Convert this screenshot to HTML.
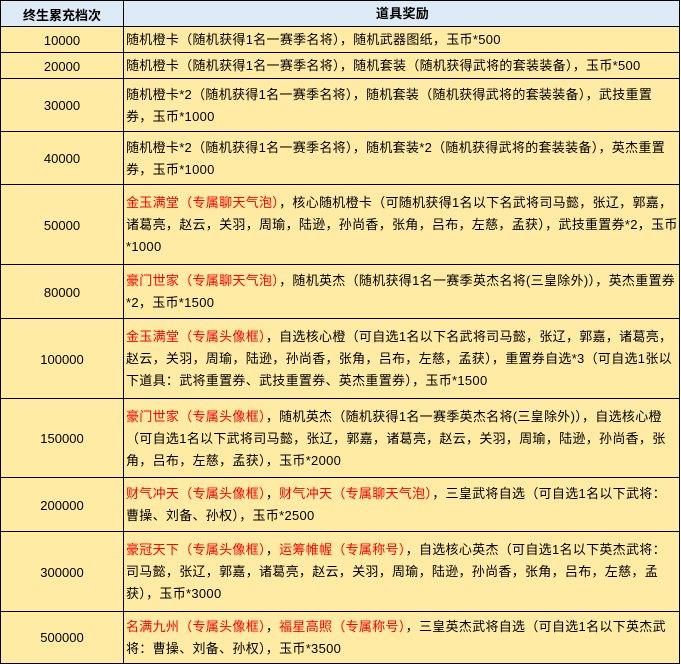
<!DOCTYPE html>
<html><head><meta charset="utf-8"><style>
body{margin:0;width:681px;height:664px;background:#fff;font-family:"Liberation Sans","Noto Sans CJK SC",sans-serif;font-size:13px;color:#000;overflow:hidden}
.r{position:absolute;left:0;width:680px;display:flex;background:#FFEBA4;border-top:1px solid #000;box-sizing:border-box}
.a{width:124px;border-left:1px solid #000;border-right:1px solid #000;display:flex;align-items:center;justify-content:center;box-sizing:border-box}
.b{flex:1;display:flex;align-items:center;padding-left:2px;line-height:22px;white-space:nowrap;border-right:1px solid #000;letter-spacing:0.3px}
.red{color:#FF0000}
.h{background:#DDEBF7;font-weight:bold}
.h .b{justify-content:center}
</style></head><body>
<div class="r h" style="top:0;height:27px"><div class="a">终生累充档次</div><div class="b">道具奖励</div></div>
<div class="r" style="top:26px;height:27px"><div class="a">10000</div><div class="b">随机橙卡（随机获得1名一赛季名将），随机武器图纸，玉币*500</div></div>
<div class="r" style="top:52px;height:27px"><div class="a">20000</div><div class="b">随机橙卡（随机获得1名一赛季名将），随机套装（随机获得武将的套装装备），玉币*500</div></div>
<div class="r" style="top:78px;height:54px"><div class="a">30000</div><div class="b">随机橙卡*2（随机获得1名一赛季名将），随机套装（随机获得武将的套装装备），武技重置<br>券，玉币*1000</div></div>
<div class="r" style="top:131px;height:54px"><div class="a">40000</div><div class="b">随机橙卡*2（随机获得1名一赛季名将），随机套装*2（随机获得武将的套装装备），英杰重置<br>券，玉币*1000</div></div>
<div class="r" style="top:184px;height:81px"><div class="a">50000</div><div class="b"><div><span class="red">金玉满堂（专属聊天气泡）</span>，核心随机橙卡（可随机获得1名以下名武将司马懿，张辽，郭嘉，<br>诸葛亮，赵云，关羽，周瑜，陆逊，孙尚香，张角，吕布，左慈，孟获），武技重置券*2，玉币<br>*1000</div></div></div>
<div class="r" style="top:264px;height:55px"><div class="a">80000</div><div class="b"><div><span class="red">豪门世家（专属聊天气泡）</span>，随机英杰（随机获得1名一赛季英杰名将(三皇除外)），英杰重置券<br>*2，玉币*1500</div></div></div>
<div class="r" style="top:318px;height:81px"><div class="a">100000</div><div class="b"><div><span class="red">金玉满堂（专属头像框）</span>，自选核心橙（可自选1名以下名武将司马懿，张辽，郭嘉，诸葛亮，<br>赵云，关羽，周瑜，陆逊，孙尚香，张角，吕布，左慈，孟获），重置券自选*3（可自选1张以<br>下道具：武将重置券、武技重置券、英杰重置券），玉币*1500</div></div></div>
<div class="r" style="top:398px;height:80px"><div class="a">150000</div><div class="b"><div><span class="red">豪门世家（专属头像框）</span>，随机英杰（随机获得1名一赛季英杰名将(三皇除外)），自选核心橙<br>（可自选1名以下武将司马懿，张辽，郭嘉，诸葛亮，赵云，关羽，周瑜，陆逊，孙尚香，张<br>角，吕布，左慈，孟获），玉币*2000</div></div></div>
<div class="r" style="top:477px;height:55px"><div class="a">200000</div><div class="b"><div><span class="red">财气冲天（专属头像框）</span>，<span class="red">财气冲天（专属聊天气泡）</span>，三皇武将自选（可自选1名以下武将：<br>曹操、刘备、孙权），玉币*2500</div></div></div>
<div class="r" style="top:531px;height:81px"><div class="a">300000</div><div class="b"><div><span class="red">豪冠天下（专属头像框）</span>，<span class="red">运筹帷幄（专属称号）</span>，自选核心英杰（可自选1名以下英杰武将：<br>司马懿，张辽，郭嘉，诸葛亮，赵云，关羽，周瑜，陆逊，孙尚香，张角，吕布，左慈，孟<br>获），玉币*3000</div></div></div>
<div class="r" style="top:611px;height:53px;border-bottom:1px solid #000"><div class="a">500000</div><div class="b"><div><span class="red">名满九州（专属头像框）</span>，<span class="red">福星高照（专属称号）</span>，三皇英杰武将自选（可自选1名以下英杰武<br>将：曹操、刘备、孙权），玉币*3500</div></div></div>
</body></html>
